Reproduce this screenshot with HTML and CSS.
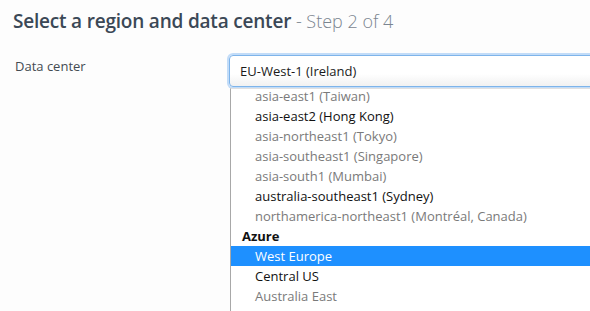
FILE: index.html
```html
<!DOCTYPE html>
<html lang="en">
<head>
    <meta charset="UTF-8">
    <meta name="viewport" content="width=device-width, initial-scale=1.0">
    <title>Select a region and data center</title>
    <link rel="stylesheet" href="styles.css">
</head>
<body>
    <div class="page">
        <h2 class="title">Select a region and data center <span class="step">- Step 2 of 4</span></h2>
        <div class="field">
            <label class="field-label" for="dc">Data center</label>
            <div class="picker">
                <div class="select" id="dc">EU-West-1 (Ireland)</div>
                <div class="dropdown">
                    <div class="list">
                        <div class="opt disabled">asia-east1 (Taiwan)</div>
                        <div class="opt">asia-east2 (Hong Kong)</div>
                        <div class="opt disabled">asia-northeast1 (Tokyo)</div>
                        <div class="opt disabled">asia-southeast1 (Singapore)</div>
                        <div class="opt disabled">asia-south1 (Mumbai)</div>
                        <div class="opt">australia-southeast1 (Sydney)</div>
                        <div class="opt disabled">northamerica-northeast1 (Montréal, Canada)</div>
                        <div class="group">Azure</div>
                        <div class="opt selected">West Europe</div>
                        <div class="opt">Central US</div>
                        <div class="opt disabled">Australia East</div>
                    </div>
                </div>
            </div>
        </div>
    </div>
</body>
</html>
```

FILE: styles.css
```css
html, body {
    margin: 0;
    height: 100%;
    overflow: hidden;
}
body {
    font-family: "Open Sans", "Noto Sans", sans-serif;
    background-color: #fdfdfd;
    color: #212529;
}
.page {
    padding: 7px 0 0 13px;
}
.title {
    margin: 0;
    font-size: 19px;
    font-weight: 600;
    color: #3b4856;
    line-height: 28px;
    letter-spacing: -0.2px;
    white-space: nowrap;
}
.step {
    font-size: 18px;
    font-weight: 300;
    letter-spacing: 0;
    color: #7b8590;
}
.field {
    display: flex;
    margin-top: 20px;
}
.field-label {
    flex: none;
    width: 214px;
    padding: 2px 0 0 2px;
    font-size: 13px;
    color: #444b52;
}
.picker {
    flex: 1;
    margin-right: -40px;
}
.select {
    height: 30px;
    line-height: 30px;
    padding-left: 10px;
    font-size: 13px;
    color: #1a1a1a;
    border: 1px solid #7eb4ea;
    border-radius: 4px;
    box-shadow: 0 0 0 2px #c2dcf8;
    background: linear-gradient(#ffffff 60%, #f1f1f1);
}
.dropdown {
    margin: 1px 0 0 1px;
    height: 230px;
    overflow: hidden;
    background: #ffffff;
    border-left: 1px solid #a8a8a8;
    border-top: 1px solid #e0e0e0;
}
.list {
    margin-top: -3px;
}
.opt {
    height: 20px;
    line-height: 20px;
    padding-left: 24px;
    font-size: 13px;
    color: #111111;
    white-space: nowrap;
}
.opt.disabled {
    color: #7a7a7a;
}
.opt.selected {
    background-color: #1e90ff;
    color: #ffffff;
}
.group {
    height: 20px;
    line-height: 20px;
    padding-left: 11px;
    font-size: 13px;
    font-weight: 700;
    color: #111111;
}
```
